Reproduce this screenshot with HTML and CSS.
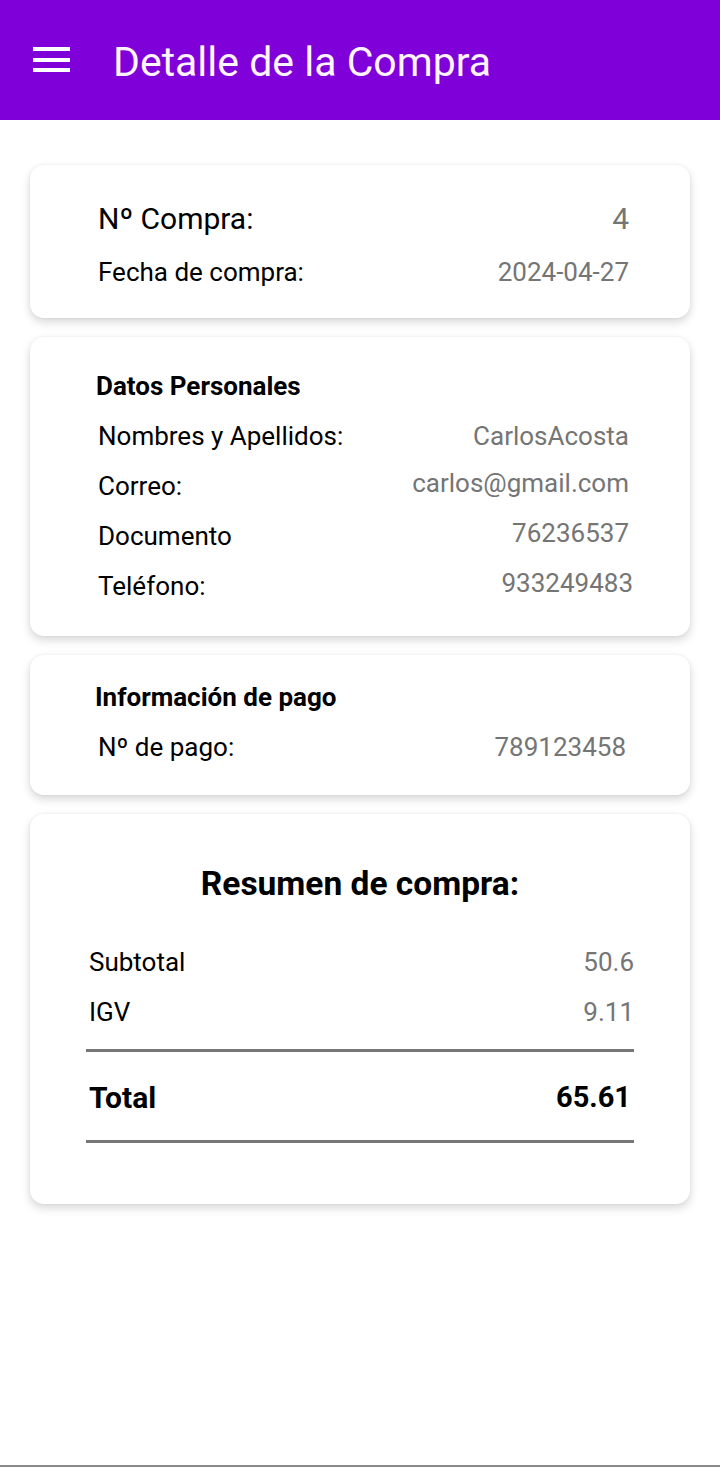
FILE: index.html
```html
<!DOCTYPE html>
<html lang="es">
<head>
<meta charset="utf-8">
<title>Detalle de la Compra</title>
<link rel="stylesheet" href="styles.css">
</head>
<body>
<div class="screen">
  <header class="appbar">
    <svg class="menu" width="38" height="26" viewBox="0 0 38 26" aria-hidden="true">
      <rect x="0" y="0" width="37" height="4" fill="#fff"/>
      <rect x="0" y="11" width="37" height="4" fill="#fff"/>
      <rect x="0" y="21" width="37" height="4" fill="#fff"/>
    </svg>
    <h1 class="title">Detalle de la Compra</h1>
  </header>

  <main class="content">
    <section class="card card-compra">
      <div class="row row-big"><span class="label">Nº Compra:</span><span class="value">4</span></div>
      <div class="row"><span class="label">Fecha de compra:</span><span class="value">2024-04-27</span></div>
    </section>

    <section class="card card-personal">
      <h2 class="heading">Datos Personales</h2>
      <div class="row"><span class="label">Nombres y Apellidos:</span><span class="value">CarlosAcosta</span></div>
      <div class="row"><span class="label">Correo:</span><span class="value value-up">carlos@gmail.com</span></div>
      <div class="row"><span class="label">Documento</span><span class="value value-up">76236537</span></div>
      <div class="row"><span class="label">Teléfono:</span><span class="value value-up value-out">933249483</span></div>
    </section>

    <section class="card card-pago">
      <h2 class="heading">Información de pago</h2>
      <div class="row"><span class="label">Nº de pago:</span><span class="value">789123458</span></div>
    </section>

    <section class="card card-resumen">
      <h2 class="summary-title">Resumen de compra:</h2>
      <div class="row"><span class="label">Subtotal</span><span class="value">50.6</span></div>
      <div class="row"><span class="label">IGV</span><span class="value">9.11</span></div>
      <div class="divider"></div>
      <div class="row row-total"><span class="label">Total</span><span class="value">65.61</span></div>
      <div class="divider"></div>
    </section>
  </main>

  <footer class="navedge"></footer>
</div>
</body>
</html>
```

FILE: styles.css
```css
* { box-sizing: border-box; }

html, body {
  margin: 0;
  padding: 0;
  background: #ffffff;
}

body {
  font-family: Roboto, "Liberation Sans", Arial, sans-serif;
  color: #000;
}

.screen {
  min-height: 1467px;
  display: flex;
  flex-direction: column;
}

.appbar {
  height: 120px;
  background: #7f00d8;
  display: flex;
  align-items: center;
  padding-left: 33px;
  gap: 42px;
}

.menu {
  display: block;
  margin-top: -1px;
}

.title {
  margin: 4px 0 0;
  font-weight: 400;
  font-size: 41px;
  color: #fdf4ff;
}

.content {
  padding: 45px 30px 0;
  display: flex;
  flex-direction: column;
  gap: 19px;
}

.card {
  background: #fff;
  border-radius: 14px;
  box-shadow: 0 4px 10px rgba(0, 0, 0, 0.16), 0 0 3px rgba(0, 0, 0, 0.06);
  display: flex;
  flex-direction: column;
  gap: 10px;
}

.row {
  height: 40px;
  display: flex;
  align-items: center;
  justify-content: space-between;
  font-size: 26px;
  white-space: nowrap;
}

.label { color: #000; }
.value { color: #757575; }
.value-up { position: relative; top: -3px; }
.value-out { margin-right: -4px; }

.heading {
  margin: 0;
  height: 40px;
  display: flex;
  align-items: center;
  font-size: 26px;
  font-weight: 700;
  white-space: nowrap;
}

/* card 1 */
.card-compra {
  height: 153px;
  padding: 32px 61px 0 68px;
  gap: 12px;
}
.card-compra .row { height: 42px; }
.card-compra .row-big { font-size: 30px; }

/* card 2 */
.card-personal {
  height: 299px;
  padding: 29px 61px 0 66px;
}
.card-personal .row { margin-left: 2px; }

/* card 3 */
.card-pago {
  height: 140px;
  padding: 22px 64px 0 65px;
}
.card-pago .row { margin-left: 3px; }

/* card 4 */
.card-resumen {
  height: 390px;
  padding: 44px 56px 0 56px;
  gap: 0;
}
.summary-title {
  margin: 0 0 34px;
  height: 50px;
  display: flex;
  align-items: center;
  justify-content: center;
  font-size: 33.5px;
  font-weight: 700;
  white-space: nowrap;
}
.card-resumen .row { padding-left: 3px; }
.card-resumen .row + .row { margin-top: 10px; }
.divider {
  height: 3px;
  background: #777;
  margin: 17px 0 0;
}
.row-total {
  margin-top: 25px;
  font-size: 30px;
  font-weight: 700;
}
.row-total .value { color: #000; padding-right: 3px; font-size: 29px; }
.row-total + .divider { margin-top: 23px; }

.navedge {
  margin-top: auto;
  height: 2px;
  background: #8a8a8a;
}
```
